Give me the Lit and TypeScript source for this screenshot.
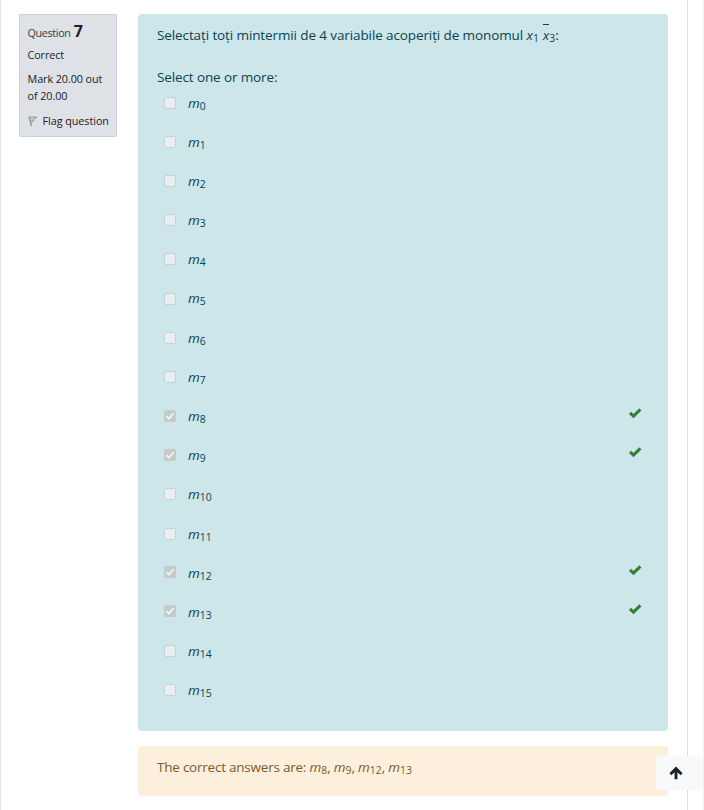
import { LitElement, html, css, svg } from "lit";
import { customElement } from "lit/decorators.js";

const minterm = (n: number) => html`<span class="math"><i>m</i><span class="sub">${n}</span></span>`;
const CORRECT = [8, 9, 12, 13];

@customElement("app-root")
export class AppRoot extends LitElement {
  static styles = css`
    :host { display: block; font-family: "Open Sans", "Noto Sans", sans-serif; }
    * { box-sizing: border-box; }
    .page { position: relative; width: 704px; height: 810px; overflow: hidden; background: #fff; border-left: 1px solid #dee2e6; border-right: 1px solid #f1f1f1; }
    .region { width: 687px; height: 810px; border-right: 1px solid #dcdddf; padding: 14px 19px 0 18px; display: flex; gap: 21px; align-items: flex-start; }
    .info { width: 98px; height: 123px; flex: none; background: #dee1e6; border: 1px solid #c8d0d8; border-radius: 2px; padding: 7px 0 0 7.5px; font-size: 10.8px; color: #1d2125; white-space: nowrap; }
    .no { display: flex; align-items: baseline; gap: 3px; height: 23px; line-height: 18px; }
    .no .q { letter-spacing: -0.35px; color: #3a3e43; }
    .no b { font-size: 16px; }
    .state { height: 24px; line-height: 20px; letter-spacing: -0.1px; }
    .grade { line-height: 17px; height: 43px; padding-top: 1px; letter-spacing: -0.08px; }
    .flag { display: flex; align-items: center; line-height: 18px; letter-spacing: -0.05px; }
    .flag svg { width: 10px; height: 12px; margin-right: 5px; }
    .main { width: 530px; flex: none; font-size: 13.5px; }
    .formulation { height: 717px; background: #cde6ea; color: #0b4252; border-radius: 4px; padding: 11px 19px 0; }
    .prompt { height: 42px; line-height: 21px; white-space: nowrap; letter-spacing: -0.11px; }
    .ask { height: 21px; line-height: 21px; letter-spacing: -0.12px; }
    .math { white-space: nowrap; letter-spacing: 0; }
    .sub { font-size: 10.4px; position: relative; top: 2px; line-height: 0; }
    .bar { position: relative; }
    .bar::before { content: ""; position: absolute; left: 0; top: -2px; width: 6px; height: 1px; background: #0b4252; }
    .x2 { margin-left: 4px; }
    .row { height: 39.2px; display: flex; align-items: flex-start; padding-left: 7px; }
    .box { width: 12px; height: 12px; margin-top: 8.6px; margin-right: 12px; background: #e9eff1; border: 1px solid #c7d0d2; border-radius: 2px; display: flex; }
    .box.on { background: #c5cacb; border-color: #c5cacb; margin-top: 8px; }
    .box svg { width: 10px; height: 10px; }
    .row .math { line-height: 21px; margin-top: 4.5px; flex: 1; }
    .row > .tick { width: 14px; height: 12px; margin: 5.6px 7.5px 0 0; }
    .outcome { margin-top: 15px; height: 50px; background: #fcefdc; color: #7d5a29; border-radius: 4px; padding: 11px 19px; line-height: 21px; white-space: nowrap; letter-spacing: -0.23px; }
    .top { position: absolute; left: 655px; top: 756px; width: 47px; height: 34px; border: 0; border-radius: 4px; background: #f8f9fa; display: flex; align-items: center; justify-content: center; padding: 0 7px 0 0; }
    .top svg { width: 14px; height: 14px; }
  `;

  row(n: number) {
    const on = CORRECT.includes(n);
    return html`<div class="row">
      <span class="box ${on ? "on" : ""}">${on ? html`<svg viewBox="0 0 10 10">${svg`<path d="M1.5 5.2 4 7.7 8.6 2" fill="none" stroke="#f2f5f5" stroke-width="1.8"/>`}</svg>` : ""}</span>
      ${minterm(n)}
      ${on ? html`<svg class="tick" viewBox="0 0 14 12"><path d="M2 5.8 5.5 9.2 12.4 2.4" fill="none" stroke="#357f35" stroke-width="3.1"/></svg>` : ""}
    </div>`;
  }

  render() {
    return html`<div class="page">
      <div class="region">
        <div class="info">
          <div class="no"><span class="q">Question</span><b>7</b></div>
          <div class="state">Correct</div>
          <div class="grade">Mark 20.00 out<br />of 20.00</div>
          <div class="flag"><svg viewBox="0 0 10 12"><path d="M1 2 3.6 11.2" fill="none" stroke="#85888c" stroke-width="1.2"/><path d="M1 2 9 2.2 5.6 4.2 5.2 6.6 2.8 6.4Z" fill="#ced1d5" stroke="#909397" stroke-width="1"/></svg><span class="ft">Flag question</span></div>
        </div>
        <div class="main">
          <div class="formulation">
            <div class="prompt">Selectați toți mintermii de 4 variabile acoperiți de monomul <span class="math"><i>x</i><span class="sub">1</span><span class="x2 bar"><i>x</i></span><span class="sub">3</span></span>:</div>
            <div class="ask">Select one or more:</div>
            ${Array.from({ length: 16 }, (_, n) => this.row(n))}
          </div>
          <div class="outcome">The correct answers are: ${CORRECT.map((n, i) => html`${i ? ", " : ""}${minterm(n)}`)}</div>
        </div>
      </div>
      <button class="top" aria-label="Scroll to top"><svg viewBox="0 0 14 14"><path d="M7 13.2V3M1.4 8.2 7 2.6 12.6 8.2" fill="none" stroke="#1d2125" stroke-width="2.9"/></svg></button>
    </div>`;
  }
}
